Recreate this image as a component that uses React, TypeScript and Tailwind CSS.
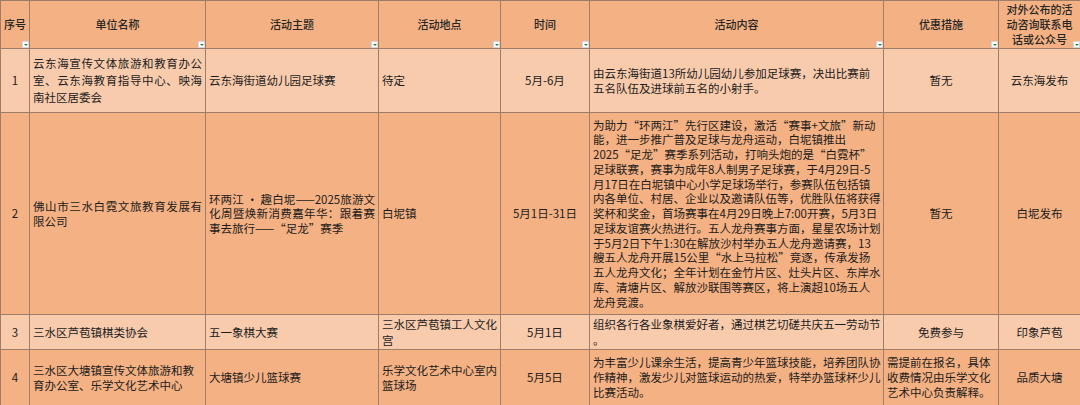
import React from 'react';

type Cell = {
  lines: string[];
  align?: 'left' | 'center';
  justify?: boolean;
  lh?: string;
};

type Row = {
  h: string;
  bg: string;
  cells: Cell[];
};

const headers: string[][] = [
  ['序号'],
  ['单位名称'],
  ['活动主题'],
  ['活动地点'],
  ['时间'],
  ['活动内容'],
  ['优惠措施'],
  ['对外公布的活', '动咨询联系电', '话或公众号'],
];

const rows: Row[] = [
  {
    h: 'h-[64px]',
    bg: 'bg-[#f8cbad]',
    cells: [
      { lines: ['1'], align: 'center' },
      {
        lines: ['云东海宣传文体旅游和教育办公', '室、云东海教育指导中心、映海', '南社区居委会'],
        justify: true,
        lh: 'leading-[17px]',
      },
      { lines: ['云东海街道幼儿园足球赛'] },
      { lines: ['待定'] },
      { lines: ['5月-6月'], align: 'center' },
      { lines: ['由云东海街道13所幼儿园幼儿参加足球赛，决出比赛前', '五名队伍及进球前五名的小射手。'] },
      { lines: ['暂无'], align: 'center' },
      { lines: ['云东海发布'], align: 'center' },
    ],
  },
  {
    h: 'h-[202px]',
    bg: 'bg-[#f4b183]',
    cells: [
      { lines: ['2'], align: 'center' },
      { lines: ['佛山市三水白霓文旅教育发展有', '限公司'], justify: true },
      {
        lines: ['环两江 • 趣白坭——2025旅游文', '化周暨焕新消费嘉年华：跟着赛', '事去旅行——“足龙”赛季'],
        justify: true,
      },
      { lines: ['白坭镇'] },
      { lines: ['5月1日-31日'], align: 'center' },
      {
        lines: [
          '为助力“环两江”先行区建设，激活“赛事+文旅”新动',
          '能，进一步推广普及足球与龙舟运动，白坭镇推出',
          '2025“足龙”赛季系列活动，打响头炮的是“白霓杯”',
          '足球联赛，赛事为成年8人制男子足球赛，于4月29日-5',
          '月17日在白坭镇中心小学足球场举行，参赛队伍包括镇',
          '内各单位、村居、企业以及邀请队伍等，优胜队伍将获得',
          '奖杯和奖金，首场赛事在4月29日晚上7:00开赛，5月3日',
          '足球友谊赛火热进行。五人龙舟赛事方面，星星农场计划',
          '于5月2日下午1:30在解放沙村举办五人龙舟邀请赛，13',
          '艘五人龙舟开展15公里“水上马拉松”竞逐，传承发扬',
          '五人龙舟文化；全年计划在金竹片区、灶头片区、东岸水',
          '库、清塘片区、解放沙联围等赛区，将上演超10场五人',
          '龙舟竞渡。',
        ],
        lh: 'leading-[14.75px]',
      },
      { lines: ['暂无'], align: 'center' },
      { lines: ['白坭发布'], align: 'center' },
    ],
  },
  {
    h: 'h-[35px]',
    bg: 'bg-[#f8cbad]',
    cells: [
      { lines: ['3'], align: 'center' },
      { lines: ['三水区芦苞镇棋类协会'] },
      { lines: ['五一象棋大赛'] },
      { lines: ['三水区芦苞镇工人文化', '宫'], lh: 'leading-[16px]' },
      { lines: ['5月1日'], align: 'center' },
      { lines: ['组织各行各业象棋爱好者，通过棋艺切磋共庆五一劳动节', '。'], lh: 'leading-[16px]' },
      { lines: ['免费参与'], align: 'center' },
      { lines: ['印象芦苞'], align: 'center' },
    ],
  },
  {
    h: 'h-[56px]',
    bg: 'bg-[#f4b183]',
    cells: [
      { lines: ['4'], align: 'center' },
      { lines: ['三水区大塘镇宣传文体旅游和教', '育办公室、乐学文化艺术中心'] },
      { lines: ['大塘镇少儿篮球赛'] },
      { lines: ['乐学文化艺术中心室内', '篮球场'] },
      { lines: ['5月5日'], align: 'center' },
      {
        lines: [
          '为丰富少儿课余生活，提高青少年篮球技能，培养团队协',
          '作精神，激发少儿对篮球运动的热爱，特举办篮球杯少儿',
          '比赛活动。',
        ],
        lh: 'leading-[15px]',
      },
      { lines: ['需提前在报名，具体', '收费情况由乐学文化', '艺术中心负责解释。'], lh: 'leading-[15px]' },
      { lines: ['品质大塘'], align: 'center' },
    ],
  },
];

const FilterButton = () => (
  <span className="absolute bottom-0 right-0 flex h-[7px] w-[7px] items-center justify-center border border-[#d6d6d6] bg-white">
    <span className="h-0 w-0 border-x-[2px] border-t-[2px] border-x-transparent border-t-[#1e8a52]" />
  </span>
);

const CellText = ({ cell }: { cell: Cell }) => {
  const last = cell.lines.length - 1;
  return (
    <div className={cell.lh ?? 'leading-[14.5px]'}>
      {cell.lines.map((line, i) => (
        <div
          key={i}
          className={
            'whitespace-nowrap ' +
            (cell.justify && i < last ? '[text-align-last:justify]' : '')
          }
        >
          {line}
        </div>
      ))}
    </div>
  );
};

export default function App() {
  return (
    <div className="h-[405px] w-[1080px] overflow-hidden bg-[#f4b183] font-['Noto_Sans_CJK_SC',sans-serif]">
      <table className="w-[1080px] table-fixed border-collapse">
        <colgroup>
          <col className="w-[29px]" />
          <col className="w-[176px]" />
          <col className="w-[173px]" />
          <col className="w-[122px]" />
          <col className="w-[89px]" />
          <col className="w-[294px]" />
          <col className="w-[115px]" />
          <col className="w-[82px]" />
        </colgroup>
        <thead>
          <tr className="h-[48px] bg-[#f4b183]">
            {headers.map((h, i) => (
              <th
                key={i}
                className="relative border border-[#9f7d69] p-0 text-center align-middle text-[11px] font-medium leading-[15px] text-[#262626]"
              >
                {h.map((line, j) => (
                  <div key={j} className="whitespace-nowrap">
                    {line}
                  </div>
                ))}
                <FilterButton />
              </th>
            ))}
          </tr>
        </thead>
        <tbody>
          {rows.map((row, r) => (
            <tr key={r} className={row.h + ' ' + row.bg}>
              {row.cells.map((cell, c) => (
                <td
                  key={c}
                  className={
                    'border border-[#9f7d69] px-[3px] py-0 align-middle text-[11.5px] text-[#1c1c1c] ' +
                    (cell.align === 'center' ? 'text-center' : 'text-left')
                  }
                >
                  <CellText cell={cell} />
                </td>
              ))}
            </tr>
          ))}
        </tbody>
      </table>
    </div>
  );
}
